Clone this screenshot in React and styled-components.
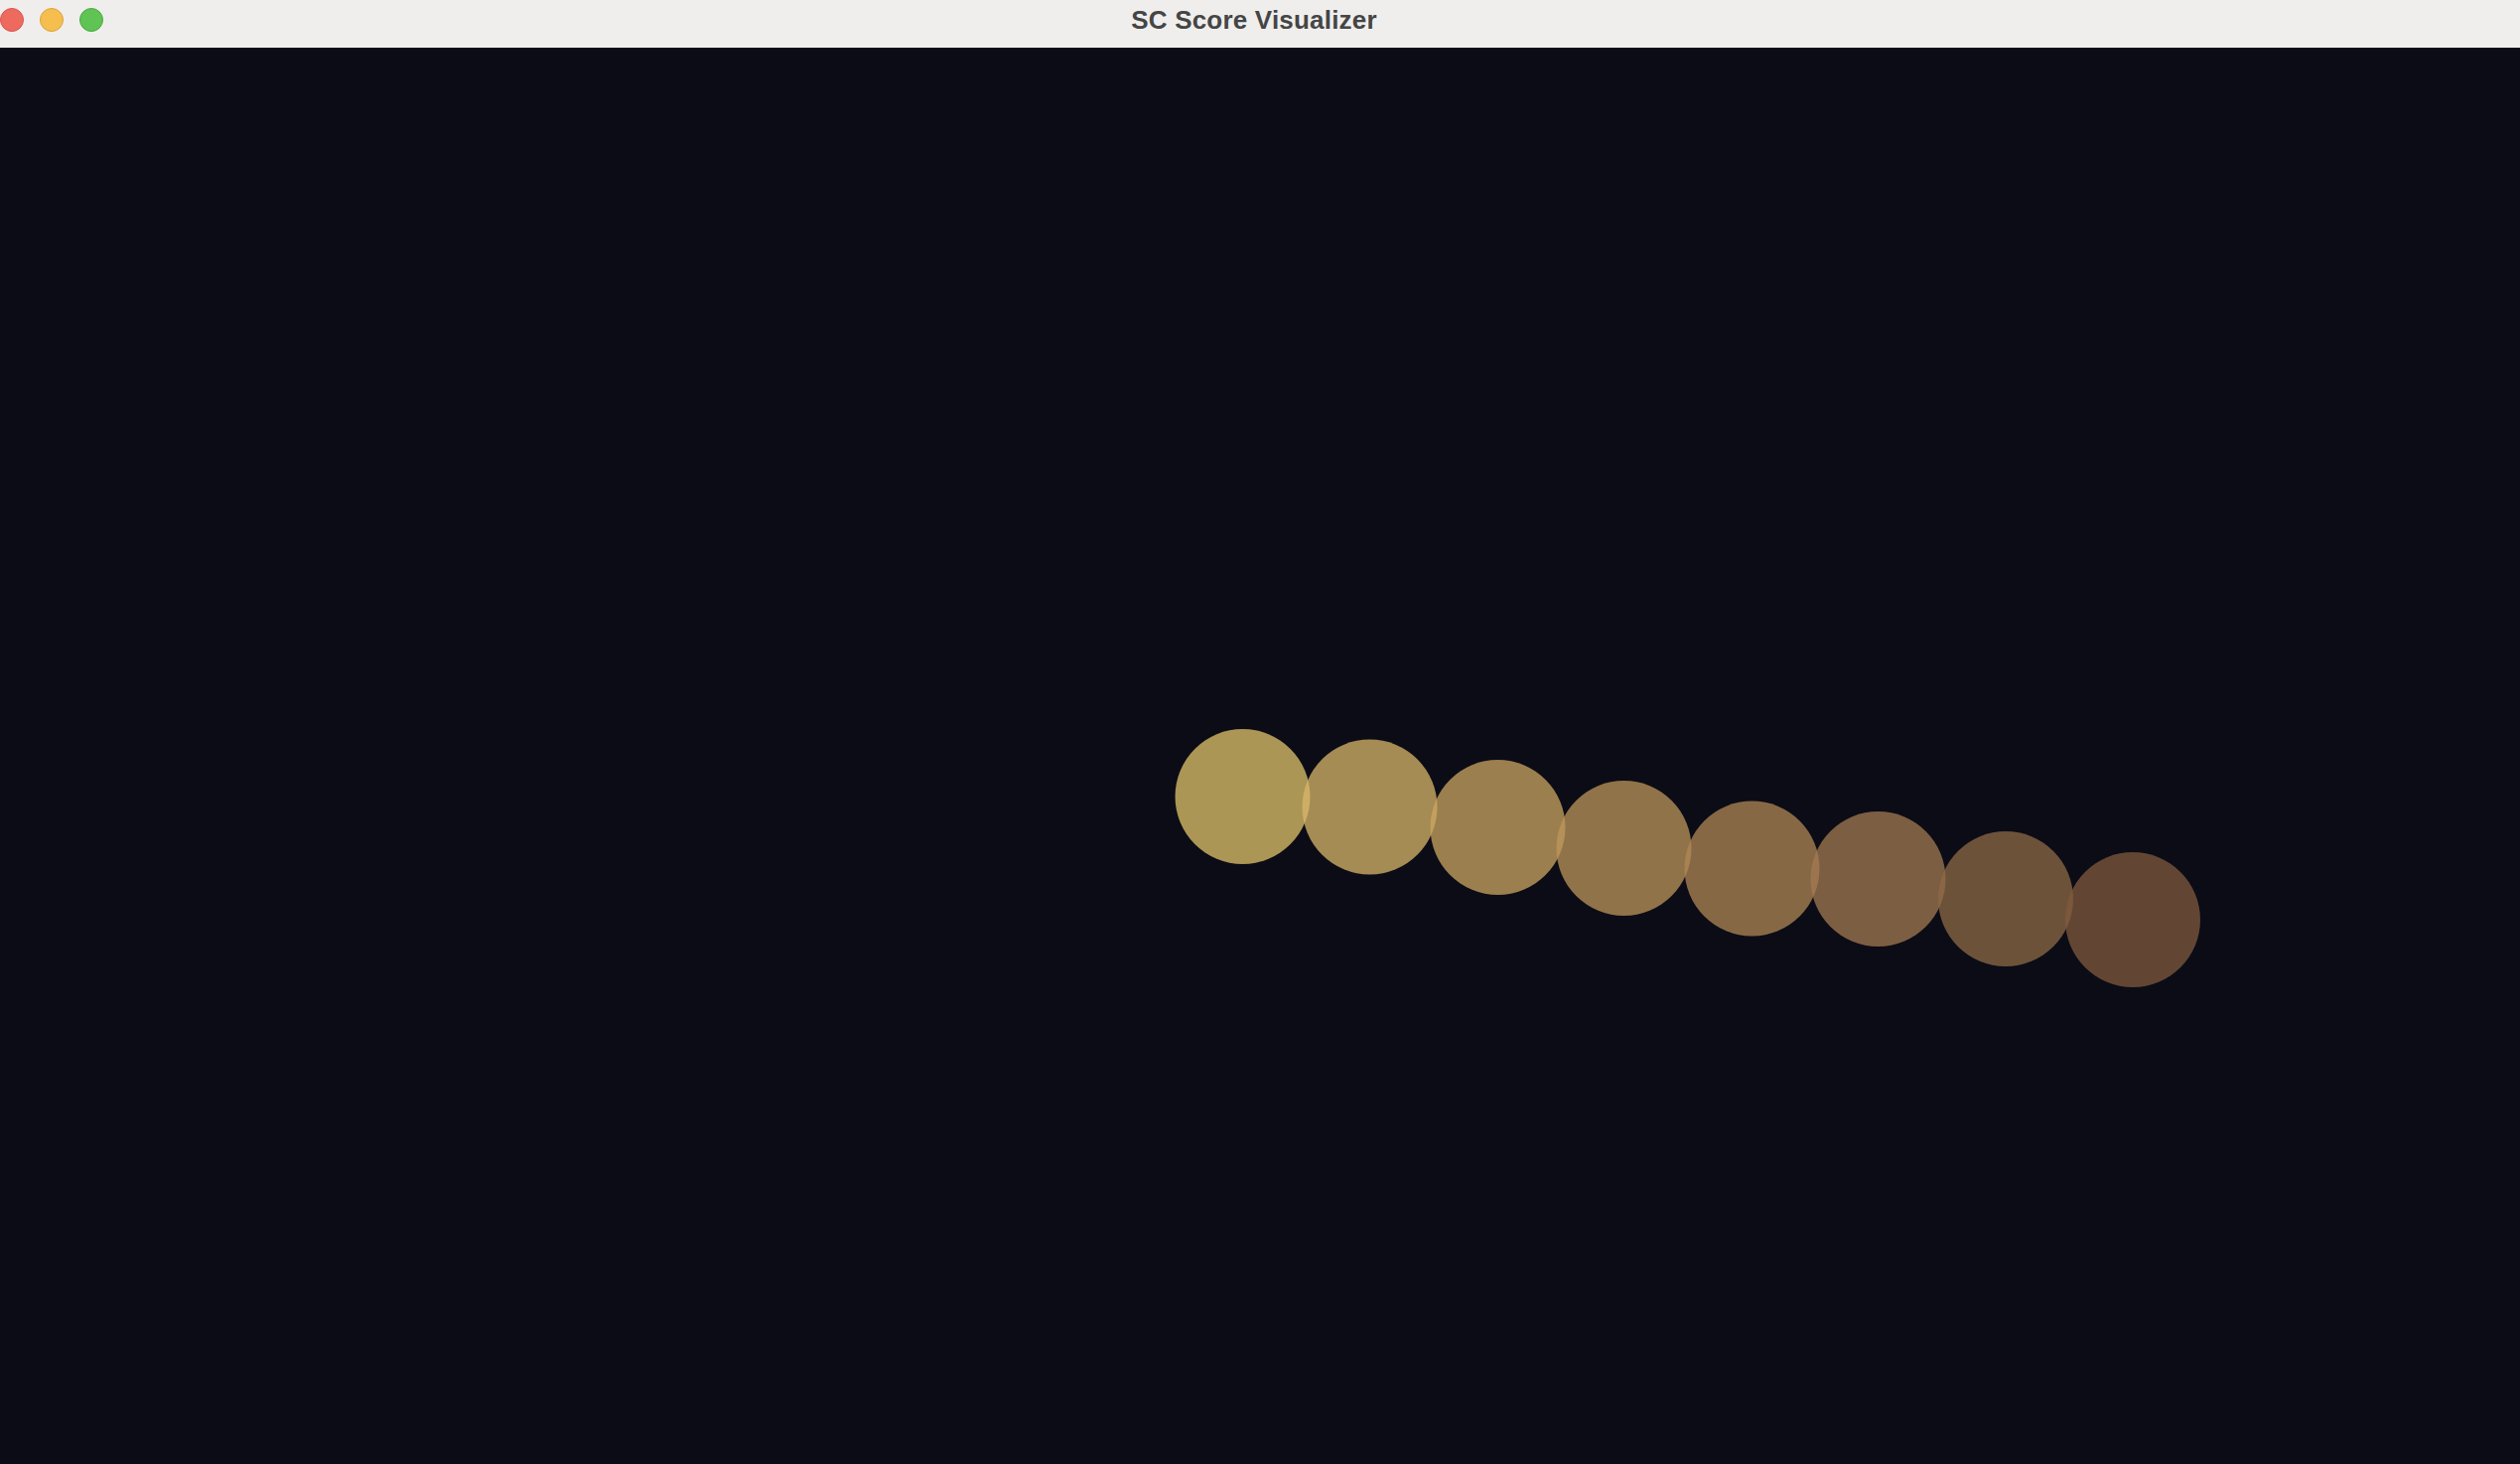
import React from "react";
import styled, { createGlobalStyle } from "styled-components";

const Global = createGlobalStyle`
  html, body, #root { margin: 0; padding: 0; height: 100%; }
  body { background: #0b0c16; overflow: hidden; }
`;

const Window = styled.div`
  display: flex;
  flex-direction: column;
  width: 100vw;
  height: 100vh;
`;

const TitleBar = styled.div`
  position: relative;
  flex: 0 0 48px;
  display: flex;
  align-items: flex-start;
  justify-content: center;
  background: #efeeed;
  padding: 5px 12px 0 0;
  box-sizing: border-box;
`;

const Lights = styled.div`
  position: absolute;
  left: 0;
  top: 8px;
  display: flex;
  gap: 16px;
`;

const Light = styled.span`
  width: 24px;
  height: 24px;
  border-radius: 50%;
  box-sizing: border-box;
  background: ${(p) => p.$fill};
  border: 1px solid ${(p) => p.$edge};
`;

const Title = styled.div`
  font-family: "Liberation Sans", Arial, sans-serif;
  font-weight: 700;
  font-size: 26px;
  line-height: 30px;
  letter-spacing: 0.2px;
  color: #454545;
`;

const Stage = styled.div`
  flex: 1;
  background: #0b0c16;
  min-height: 0;
`;

const Canvas = styled.svg`
  display: block;
  width: 100%;
  height: 100%;
`;

const dots = [
  { x: 1251.5, y: 802, c: "rgb(226,196,107)" },
  { x: 1379.5, y: 812.5, c: "rgb(217,181,106)" },
  { x: 1508.5, y: 833, c: "rgb(205,166,98)" },
  { x: 1635.5, y: 854, c: "rgb(189,150,91)" },
  { x: 1764.5, y: 874.5, c: "rgb(177,135,86)" },
  { x: 1891.5, y: 885, c: "rgb(163,122,82)" },
  { x: 2020, y: 905, c: "rgb(143,105,71)" },
  { x: 2148, y: 926, c: "rgb(128,89,62)" },
];

export default function App() {
  return (
    <Window>
      <Global />
      <TitleBar>
        <Lights>
          <Light $fill="#ee6a5f" $edge="#d6564c" />
          <Light $fill="#f6be4f" $edge="#dca33a" />
          <Light $fill="#5fc454" $edge="#4aa83f" />
        </Lights>
        <Title>SC Score Visualizer</Title>
      </TitleBar>
      <Stage>
        <Canvas viewBox="0 0 2538 1426" preserveAspectRatio="xMinYMin meet">
          {dots.map((d, i) => (
            <circle key={i} cx={d.x} cy={d.y - 48} r={68} fill={d.c} fillOpacity={0.75} />
          ))}
        </Canvas>
      </Stage>
    </Window>
  );
}
